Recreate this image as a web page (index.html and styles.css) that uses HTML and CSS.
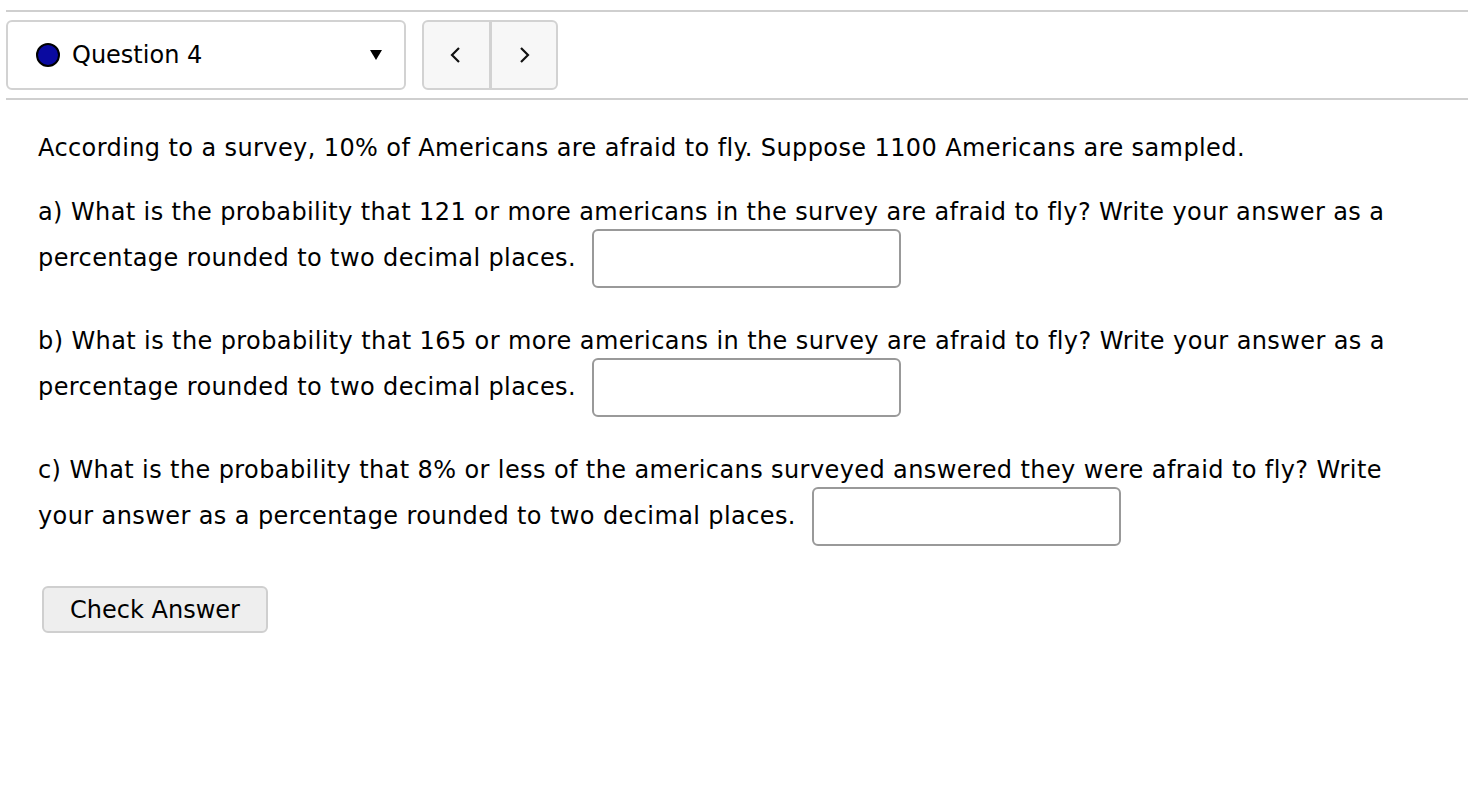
FILE: index.html
```html
<!DOCTYPE html>
<html>
<head>
<meta charset="utf-8">
<link rel="stylesheet" href="styles.css">
</head>
<body>
<div class="rule rule-top"></div>
<div class="toolbar">
  <div class="qselect">
    <span class="dot"></span>
    <span class="qlabel">Question 4</span>
    <span class="caret"></span>
  </div>
  <div class="nav">
    <button class="navbtn" aria-label="Previous">
      <svg width="14" height="20" viewBox="0 0 14 20"><path d="M10 3 L3 10 L10 17" fill="none" stroke="#111" stroke-width="2.2"/></svg>
    </button>
    <button class="navbtn" aria-label="Next">
      <svg width="14" height="20" viewBox="0 0 14 20"><path d="M4 3 L11 10 L4 17" fill="none" stroke="#111" stroke-width="2.2"/></svg>
    </button>
  </div>
</div>
<div class="rule rule-bottom"></div>

<div class="question">
  <p class="intro">According to a survey, 10% of Americans are afraid to fly. Suppose 1100 Americans are sampled.</p>
  <p class="part">a) What is the probability that 121 or more americans in the survey are afraid to fly? Write your answer as a percentage rounded to two decimal places. <input class="ans" type="text"></p>
  <p class="part">b) What is the probability that 165 or more americans in the survey are afraid to fly? Write your answer as a percentage rounded to two decimal places. <input class="ans" type="text"></p>
  <p class="part">c) What is the probability that 8% or less of the americans surveyed answered they were afraid to fly? Write your answer as a percentage rounded to two decimal places. <input class="ans" type="text"></p>
  <button class="check">Check Answer</button>
</div>
</body>
</html>
```
FILE: styles.css
```css
html, body {
  margin: 0;
  padding: 0;
  background: #fff;
}
body {
  font-family: "DejaVu Sans", sans-serif;
  font-size: 24px;
  letter-spacing: 0.4px;
  color: #000;
}
.rule {
  height: 2px;
  background: #cfcfcf;
  margin-left: 6px;
}
.rule-top {
  margin-top: 10px;
}
.toolbar {
  display: flex;
  gap: 16px;
  margin: 8px 0 0 6px;
  height: 70px;
}
.qselect {
  box-sizing: border-box;
  width: 400px;
  height: 70px;
  border: 2px solid #d2d2d2;
  border-radius: 6px;
  display: flex;
  align-items: center;
  padding-left: 28px;
}
.dot {
  width: 24px;
  height: 24px;
  border-radius: 50%;
  background: #0a0aa0;
  border: 2px solid #000;
  box-sizing: border-box;
  margin-right: 12px;
}
.qlabel {
  font-size: 24px;
  letter-spacing: 0;
}
.caret {
  margin-left: auto;
  margin-right: 22px;
  width: 0;
  height: 0;
  border-left: 6px solid transparent;
  border-right: 6px solid transparent;
  border-top: 10px solid #000;
}
.nav {
  box-sizing: border-box;
  width: 136px;
  height: 70px;
  display: flex;
  border: 2px solid #d2d2d2;
  border-radius: 6px;
  background: #f7f7f7;
  overflow: hidden;
}
.navbtn {
  flex: 1;
  border: 0;
  background: transparent;
  display: flex;
  align-items: center;
  justify-content: center;
  padding: 0;
}
.navbtn + .navbtn {
  border-left: 3px solid #d2d2d2;
}
.rule-bottom {
  margin-top: 8px;
}
.question {
  padding: 25px 40px 0 38px;
}
.question p {
  margin: 0;
  line-height: 46px;
}
.intro {
  margin-bottom: 18px !important;
}
.part {
  margin-bottom: 36px !important;
}
.ans {
  box-sizing: border-box;
  width: 309px;
  height: 59px;
  border: 2px solid #999;
  border-radius: 6px;
  vertical-align: middle;
  margin: -7px 0 -6px 8px;
  font: inherit;
}
.check {
  margin: 10px 0 0 4px;
  box-sizing: border-box;
  width: 226px;
  height: 47px;
  background: #eeeeee;
  border: 2px solid #cfcfcf;
  border-radius: 6px;
  font-family: inherit;
  font-size: 24px;
  letter-spacing: 0;
  color: #000;
  padding: 0;
}
```
